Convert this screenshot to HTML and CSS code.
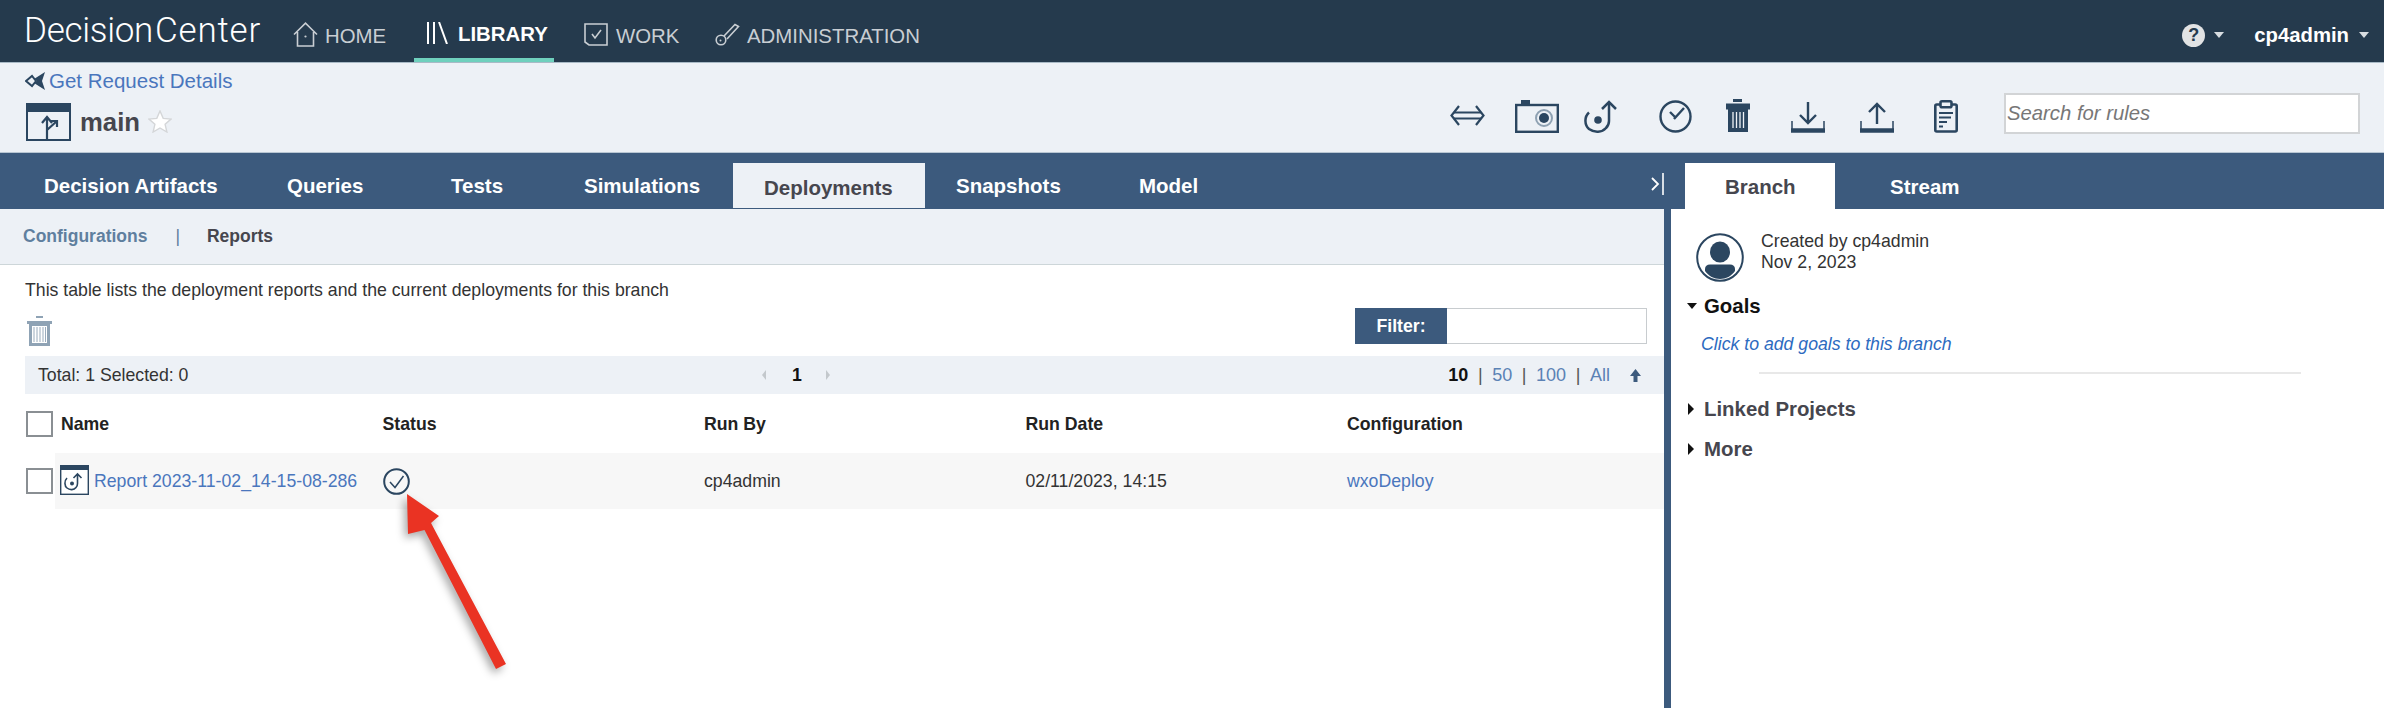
FILE: index.html
```html
<!DOCTYPE html>
<html lang="en">
<head>
<meta charset="utf-8">
<title>Decision Center</title>
<link rel="stylesheet" href="styles.css">
</head>
<body>
<div class="app">
  <header class="topbar">
    <div class="brand"><span>Decision</span><span class="brand-b">Center</span></div>
    <nav class="mainnav">
      <a class="navitem nav-home">
        <svg class="ico" width="25" height="25" viewBox="0 0 25 25" fill="none" stroke="#c9ced3" stroke-width="1.6"><path d="M1 12.5 12.5 1.2 24 12.5M4.5 10v14h16V10"/><circle cx="12.5" cy="14.5" r="1.1" fill="#c9ced3" stroke="none"/></svg>
        <span>HOME</span>
      </a>
      <a class="navitem nav-lib active">
        <svg class="ico" width="22" height="22" viewBox="0 0 22 22" fill="none" stroke="#fff" stroke-width="2"><path d="M2 0v22M8 0v22M13 0l8 22"/></svg>
        <span>LIBRARY</span>
      </a>
      <a class="navitem nav-work">
        <svg class="ico" width="24" height="23" viewBox="0 0 24 23" fill="none" stroke="#c9ced3" stroke-width="1.6"><path d="M1 1h22v21H5l-4-3z"/><path d="M8 11l3 4 6-8"/></svg>
        <span>WORK</span>
      </a>
      <a class="navitem nav-admin">
        <svg class="ico" width="25" height="23" viewBox="0 0 25 23" fill="none" stroke="#c9ced3" stroke-width="1.6"><circle cx="6" cy="17" r="4.8"/><path d="M9 13 20 1.5l3.5 2L12 16"/><circle cx="5.5" cy="17.5" r="1" fill="#c9ced3" stroke="none"/></svg>
        <span>ADMINISTRATION</span>
      </a>
    </nav>
    <div class="usermenu">
      <span class="help">?</span><i class="caret-down light"></i>
      <span class="user">cp4admin</span><i class="caret-down light"></i>
    </div>
  </header>

  <section class="subheader">
    <div class="crumbs">
      <a class="reqlink">
        <svg width="21" height="20" viewBox="0 0 21 20"><path d="M1 10 7 5l4 5-4 5z" fill="none" stroke="#2b4660" stroke-width="2"/><path d="M9 8l11-7-3 9 3 9-11-7 3-2z" fill="#2b4660"/></svg>
        <span>Get Request Details</span>
      </a>
      <div class="branchname">
        <svg width="45" height="38" viewBox="0 0 45 38"><rect x="1" y="1" width="43" height="36" fill="#edf1f6" stroke="#2b4660" stroke-width="2"/><rect x="1" y="1" width="43" height="8" fill="#2b4660"/><path d="M21 36V15M16 20l5-6 5 6M21 27l10-9M25 18h6v6" fill="none" stroke="#2b4660" stroke-width="2.2"/></svg>
        <span class="bname">main</span>
        <svg class="star" width="24" height="23" viewBox="0 0 24 23"><path d="M12 1l3.2 7.4 7.8.7-5.900 5.200 1.800 7.700L12 18l-6.900 4 1.800-7.700L1 9.100l7.800-.7z" fill="#fff" stroke="#d4d6d8" stroke-width="1.4"/></svg>
      </div>
    </div>
    <div class="toolbar">
      <svg class="t-swap" width="35" height="21" viewBox="0 0 35 21" fill="none" stroke="#2b4660" stroke-width="2.2"><path d="M9 1 1.500 10.500 9 20M26 1l7.500 9.500L26 20"/><path d="M4 7.500h27M4 13.500h27" stroke-width="1.8"/></svg>
      <svg class="t-cam" width="44" height="33" viewBox="0 0 44 33"><rect x="1.200" y="5" width="41.600" height="26.800" fill="none" stroke="#2b4660" stroke-width="2.400"/><rect x="6" y="0" width="9" height="5" fill="#2b4660"/><circle cx="29" cy="18" r="8" fill="none" stroke="#8ea1b2" stroke-width="2"/><circle cx="29" cy="18" r="5" fill="#2b4660"/></svg>
      <svg class="t-dep" width="34" height="33" viewBox="0 0 34 33" fill="none" stroke="#2b4660" stroke-width="2.500"><path d="M5 12.500C0 17 .5 25 5 29c5.500 4 13 3.500 17-1 2-2 3-4 3-7V2"/><path d="M18 9l7-7 7 7"/><circle cx="14" cy="20" r="3.800" fill="#2b4660" stroke="none"/></svg>
      <svg class="t-clock" width="33" height="33" viewBox="0 0 33 33" fill="none" stroke="#2b4660" stroke-width="2.400"><circle cx="16.500" cy="16.500" r="15"/><path d="M11 12l5 5M15 19 25 8"/></svg>
      <svg class="t-trash" width="24" height="33" viewBox="0 0 24 33"><rect x="7" y="0" width="9" height="3" fill="#2b4660"/><rect x="0" y="4.500" width="24" height="6" fill="#2b4660"/><rect x="2" y="10" width="20" height="23" fill="#2b4660"/><path d="M7 13v16M10.500 13v16M14 13v16M17.500 13v16" stroke="#edf1f6" stroke-width="1.300"/></svg>
      <svg class="t-down" width="34" height="31" viewBox="0 0 34 31" fill="none" stroke="#2b4660" stroke-width="2.400"><path d="M17 0v20M9 13l8 8 8-8"/><path d="M1 19v8M33 19v8" stroke-width="1.500"/><path d="M0 28.500h34" stroke-width="4.500"/></svg>
      <svg class="t-up" width="34" height="31" viewBox="0 0 34 31" fill="none" stroke="#2b4660" stroke-width="2.400"><path d="M17 22V2M9 10l8-8 8 8"/><path d="M1 19v8M33 19v8" stroke-width="1.500"/><path d="M0 28.500h34" stroke-width="4.500"/></svg>
      <svg class="t-clip" width="24" height="33" viewBox="0 0 24 33" fill="none" stroke="#2b4660"><rect x="1.300" y="4.500" width="21.400" height="27" rx="1.500" stroke-width="2.600"/><rect x="6.500" y="1.300" width="11" height="6" rx="1.500" fill="#edf1f6" stroke-width="2.600"/><path d="M5 13h14M5 17.500h12M5 22h8M5 26.500h4" stroke-width="2.200"/></svg>
      <input class="search" type="text" placeholder="Search for rules">
    </div>
  </section>

  <section class="tabstrip">
    <nav class="tabs">
      <a class="tab">Decision Artifacts</a>
      <a class="tab">Queries</a>
      <a class="tab">Tests</a>
      <a class="tab">Simulations</a>
      <a class="tab selected">Deployments</a>
      <a class="tab snap">Snapshots</a>
      <a class="tab">Model</a>
    </nav>
    <div class="collapse">
      <svg width="13" height="22" viewBox="0 0 13 22" fill="none" stroke="#fff"><path d="M1 5l6 6-6 6" stroke-width="1.800"/><path d="M12 0v22" stroke-width="1.600"/></svg>
    </div>
    <nav class="sidetabs">
      <a class="sidetab selected">Branch</a>
      <a class="sidetab">Stream</a>
    </nav>
  </section>

  <div class="panes">
    <main class="mainpane">
      <div class="subnav">
        <a class="sub-link">Configurations</a>
        <span class="sub-sep">|</span>
        <a class="sub-current">Reports</a>
      </div>
      <p class="desc">This table lists the deployment reports and the current deployments for this branch</p>
      <div class="tools">
        <svg class="bigtrash" width="25" height="30" viewBox="0 0 25 30"><rect x="9" y="0" width="7" height="2" fill="#8fa3b5"/><rect x="0" y="5" width="25" height="3" fill="#8fa3b5"/><path d="M2 8h21v22H2z" fill="#8fa3b5"/><rect x="5" y="10" width="15" height="17" fill="#fff"/><path d="M7 11v15M10 11v15M13 11v15M16 11v15M18.500 11v15" stroke="#8fa3b5" stroke-width=".9"/></svg>
        <div class="filter"><label class="filter-label">Filter:</label><input class="filter-input" type="text"></div>
      </div>
      <div class="totals">
        <span class="counts">Total: 1 Selected: 0</span>
        <div class="pager"><i class="tri-left"></i><b>1</b><i class="tri-right"></i></div>
        <div class="sizes"><b>10</b><span class="pipe">|</span><a>50</a><span class="pipe">|</span><a>100</a><span class="pipe">|</span><a>All</a>
          <svg class="up" width="11" height="13" viewBox="0 0 11 13"><path d="M5.500 0 11 7H7.500v6h-4V7H0z" fill="#3c5a7d"/></svg>
        </div>
      </div>
      <div class="thead">
        <span class="check"></span>
        <div class="cells">
          <span>Name</span><span>Status</span><span>Run By</span><span>Run Date</span><span>Configuration</span>
        </div>
      </div>
      <div class="trow">
        <span class="check"></span>
        <div class="cells">
          <span class="namecell">
            <svg width="29" height="30" viewBox="0 0 29 30" fill="none" stroke="#2b4660"><rect x=".7" y=".7" width="27.600" height="28.600" stroke-width="1.400" fill="#fff"/><rect x="0" y="0" width="29" height="5" fill="#2b4660" stroke="none"/><path d="M7 13c-3 3-2.500 8 0 10 3 2.500 7 2 9-.5 1-1 1.500-2.500 1.500-4V9M13.500 13l4-4 4 4" stroke-width="1.600"/><circle cx="12" cy="18.500" r="2" fill="#2b4660" stroke="none"/></svg>
            <a class="link">Report 2023-11-02_14-15-08-286</a>
          </span>
          <span class="statuscell"><svg width="27" height="27" viewBox="0 0 27 27" fill="none" stroke="#2b4660"><circle cx="13.500" cy="13.500" r="12.300" stroke-width="2"/><path d="M7 14l5 5.500L20.500 8" stroke-width="1.500"/></svg></span>
          <span>cp4admin</span>
          <span>02/11/2023, 14:15</span>
          <a class="link">wxoDeploy</a>
        </div>
      </div>
    </main>
    <aside class="sidepane">
      <div class="creator">
        <svg width="48" height="49" viewBox="0 0 48 49"><ellipse cx="24" cy="24.500" rx="22.800" ry="23.300" fill="#fff" stroke="#2b4660" stroke-width="2"/><ellipse cx="24" cy="19" rx="10" ry="10.500" fill="#2b4660"/><path d="M9 36c0-3 2-4.500 5-4.500h20c3 0 5 1.500 5 4.500v2c-3.500 5-9 8-15 8s-11.500-3-15-8z" fill="#2b4660"/></svg>
        <div class="creator-text">Created by cp4admin<br>Nov 2, 2023</div>
      </div>
      <h3 class="sec open"><i class="tri-down"></i>Goals</h3>
      <a class="addgoals">Click to add goals to this branch</a>
      <hr class="rule">
      <h3 class="sec"><i class="tri-right dark"></i>Linked Projects</h3>
      <h3 class="sec"><i class="tri-right dark"></i>More</h3>
    </aside>
  </div>

  <svg class="callout" width="120" height="190" viewBox="400 490 120 190"><path d="M407 494 439 516 431 523 506 664 496 669 424.500 530 408 534z" fill="#ea3323"/></svg>
</div>
</body>
</html>
```

FILE: styles.css
```css
* { box-sizing: border-box; }
html, body { margin: 0; padding: 0; }
body {
  font-family: "Liberation Sans", Arial, sans-serif;
  font-size: 17.7px;
  color: #333;
  background: #fff;
}
a { text-decoration: none; }
.app { position: relative; width: 2384px; height: 708px; overflow: hidden; display: flex; flex-direction: column; }

/* top bar */
.topbar {
  height: 63px;
  flex: none;
  background: #253a4d;
  border-bottom: 1px solid #a9bac6;
  display: flex;
  align-items: stretch;
  padding-left: 24px;
  color: #fff;
}
.brand {
  display: flex;
  gap: 2px;
  width: 269px;
  font-family: Roboto, "Liberation Sans", sans-serif;
  font-weight: 300;
  font-size: 35px;
  line-height: 62px;
  letter-spacing: -.3px;
  height: 62px;
  color: #fff;
}
.brand-b { letter-spacing: .8px; }
.mainnav { display: flex; align-items: stretch; height: 62px; }
.navitem {
  display: flex;
  align-items: center;
  gap: 7px;
  font-size: 20.4px;
  color: #c9ced3;
  padding-top: 10px;
}
.navitem .ico { flex: none; margin-top: -3px; }
.nav-home { width: 121px; }
.nav-lib {
  width: 140px;
  padding-left: 12px;
  gap: 10px;
  color: #fff;
  font-weight: 700;
  border-bottom: 4px solid #6fd0bd;
}
.nav-work { margin-left: 30px; width: 131px; gap: 8px; }
.nav-admin { gap: 7px; }
.usermenu {
  margin-left: auto;
  display: flex;
  align-items: center;
  padding-right: 15px;
  height: 62px;
  padding-top: 8px;
}
.help {
  width: 23px;
  height: 23px;
  border-radius: 50%;
  background: #e2e3e4;
  color: #253a4d;
  font-weight: 700;
  font-size: 18px;
  line-height: 23px;
  text-align: center;
}
.user { font-weight: 700; font-size: 20.3px; margin-left: 30px; margin-right: 10px; color: #fff; }
.caret-down { display: inline-block; width: 0; height: 0; border: 5px solid transparent; border-top: 6px solid #d8dde1; border-bottom: 0; margin-left: 9px; }
.user + .caret-down { margin-left: 0; }

/* sub header */
.subheader {
  height: 89px;
  flex: none;
  background: #edf1f6;
  display: flex;
  justify-content: space-between;
  padding-left: 25px;
}
.crumbs { display: flex; flex-direction: column; }
.reqlink {
  display: flex;
  align-items: center;
  gap: 3px;
  margin-top: 8px;
  height: 20px;
  font-size: 20.5px;
  color: #4a76bd;
}
.branchname {
  display: flex;
  align-items: center;
  margin-top: 12px;
  margin-left: 1px;
  gap: 9px;
}
.bname { font-weight: 700; font-size: 25.7px; color: #46464e; }
.star { margin-top: -1px; margin-left: -1px; }
.toolbar {
  display: flex;
  align-items: flex-start;
  padding-top: 30px;
  padding-right: 24px;
}
.toolbar svg { flex: none; }
.t-swap { margin-top: 12px; }
.t-cam { margin-left: 30px; margin-top: 7px; }
.t-dep { margin-left: 25px; margin-top: 7px; }
.t-clock { margin-left: 41px; margin-top: 7px; }
.t-trash { margin-left: 34px; margin-top: 6px; }
.t-down { margin-left: 41px; margin-top: 9px; }
.t-up { margin-left: 35px; margin-top: 9px; }
.t-clip { margin-left: 40px; margin-top: 7px; }
.search {
  width: 356px;
  height: 41px;
  margin-left: 46px;
  border: 2px solid #d2d4d6;
  background: #fff;
  padding: 0 0 0 1px;
  font: italic 20.3px "Liberation Sans", Arial, sans-serif;
  color: #777;
}
.search::placeholder { color: #777; opacity: 1; }

/* tab strip */
.tabstrip {
  height: 57px;
  flex: none;
  background: #3c5a7d;
  border-top: 1px solid #b8c6d3;
  display: flex;
  align-items: flex-end;
  font-size: 20.5px;
  font-weight: 700;
  color: #fff;
}
.tabs {
  display: grid;
  grid-template-columns: 243px 164px 133px 149px 192px 214px 100px;
  margin-left: 44px;
  width: 1607px;
  height: 45px;
  margin-bottom: 1px;
}
.tab { color: #fff; line-height: 45px; height: 45px; }
.tab.selected { background: #edf1f6; color: #46464e; padding-left: 31px; line-height: 50px; }
.tab.snap { padding-left: 31px; }
.collapse { width: 34px; height: 56px; padding-top: 20px; flex: none; }
.sidetabs { display: flex; height: 46px; }
.sidetab { color: #fff; line-height: 48px; padding-left: 55px; }
.sidetab.selected { width: 150px; padding-left: 40px; background: #fff; color: #46464e; }

/* panes */
.panes { flex: 1; display: flex; min-height: 0; }
.mainpane { width: 1671px; flex: none; border-right: 7px solid #3c5a7d; }
.sidepane { flex: 1; padding-left: 14px; }

.subnav {
  height: 56px;
  background: #edf1f6;
  border-bottom: 1px solid #cdd6d9;
  display: flex;
  align-items: center;
  padding-left: 23px;
  font-size: 17.5px;
  font-weight: 700;
}
.sub-link { color: #5f7f9f; }
.sub-sep { margin-left: 28px; color: #5f7f9f; font-weight: 400; }
.sub-current { margin-left: 27px; color: #46464e; }

.desc { margin: 0; padding: 13px 0 0 25px; height: 43px; line-height: 24px; color: #333; }
.tools { display: flex; justify-content: space-between; height: 36px; margin-bottom: 12px; padding-left: 27px; padding-right: 17px; }
.bigtrash { margin-top: 8px; }
.filter { display: flex; width: 292px; height: 36px; border: 1px solid #c8cccf; }
.filter-label { width: 92px; margin: -1px 0 -1px -1px; background: #3c5a7d; color: #fff; font-weight: 700; text-align: center; line-height: 36px; }
.filter-input { flex: 1; min-width: 0; border: 0; background: #fff; }

.totals {
  margin-left: 25px;
  height: 38px;
  background: #edf1f6;
  display: grid;
  grid-template-columns: 724px auto 1fr;
  align-items: center;
  padding-left: 13px;
  padding-right: 23px;
}
.pager { display: flex; align-items: center; gap: 26px; }
.pager b { color: #111; }
.tri-left, .tri-right { display: inline-block; width: 0; height: 0; border: 5px solid transparent; }
.tri-left { border-right: 4px solid #c3c8cc; border-left: 0; }
.tri-right { border-left: 4px solid #c3c8cc; border-right: 0; }
.pager .tri-right { margin-left: -2px; }
.sizes { justify-self: end; display: flex; align-items: center; font-size: 18px; }
.sizes b { color: #111; }
.sizes a { color: #5b82b5; }
.pipe { margin: 0 9.6px; color: #555; }
.up { margin-left: 20px; }

.thead { display: flex; align-items: center; margin-top: 17px; margin-bottom: 16px; padding-left: 26px; font-weight: 700; color: #222; }
.trow { display: flex; align-items: center; padding-left: 26px; color: #333; }
.check { flex: none; width: 27px; height: 26px; border: 2px solid #8a8f93; background: #fff; margin-right: 2px; }
.cells { flex: 1; display: grid; grid-template-columns: repeat(4, 321.5px) 1fr; padding-left: 6px; align-items: center; }
.trow .cells { height: 56px; background: #f7f7f7; }
.namecell { display: flex; align-items: center; gap: 5px; margin-left: -1px; margin-top: -3px; }
.namecell .link { margin-top: 3px; }
.statuscell { display: flex; align-items: center; }
.link { color: #4a76bd; }

/* side pane */
.creator { display: flex; padding-left: 11px; padding-top: 24px; color: #333; height: 85px; }
.creator-text { margin-left: 17px; line-height: 21px; margin-top: -2px; }
.sec { margin: 0; font-size: 20.4px; font-weight: 700; color: #46464e; line-height: 24px; height: 40px; padding-left: 19px; position: relative; }
.sec i { position: absolute; left: 3px; top: 6px; }
.sec.open { color: #111; height: 38px; }
.tri-down { display: inline-block; width: 0; height: 0; border: 5px solid transparent; border-top: 6px solid #111; border-bottom: 0; left: 2px !important; top: 9px !important; }
.tri-right.dark { border-width: 6px 0 6px 6px; border-color: transparent transparent transparent #111; left: 3px; }
.addgoals { display: block; padding-left: 16px; font-style: italic; color: #2d6bbf; line-height: 24px; }
.rule { margin: 16px 0 23px 74px; width: 542px; height: 2px; border: 0; background: #e8e8e8; }

/* annotation arrow */
.callout { position: absolute; left: 400px; top: 490px; filter: drop-shadow(-3px 4px 4px rgba(0,0,0,.35)); }
```
